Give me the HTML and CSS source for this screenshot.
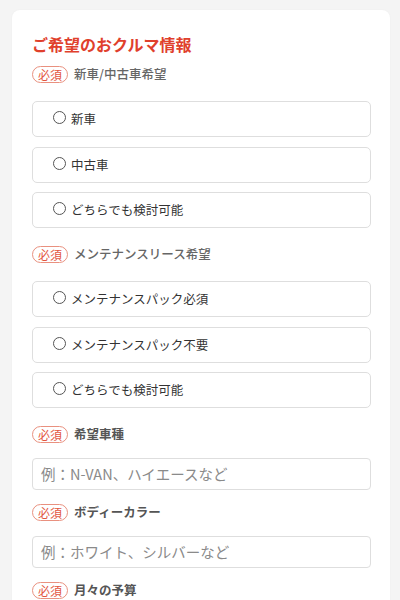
FILE: index.html
```html
<!DOCTYPE html>
<html lang="ja">
<head>
<meta charset="utf-8">
<title>ご希望のおクルマ情報</title>
<link rel="stylesheet" href="styles.css">
</head>
<body>
<div class="card">
  <h2 class="title">ご希望のおクルマ情報</h2>

  <div class="field">
    <div class="label-row"><span class="badge">必須</span><span class="label">新車/中古車希望</span></div>
    <div class="options">
      <label class="option"><span class="radio"></span><span class="opt-text">新車</span></label>
      <label class="option"><span class="radio"></span><span class="opt-text">中古車</span></label>
      <label class="option"><span class="radio"></span><span class="opt-text">どちらでも検討可能</span></label>
    </div>
  </div>

  <div class="field">
    <div class="label-row"><span class="badge">必須</span><span class="label">メンテナンスリース希望</span></div>
    <div class="options">
      <label class="option"><span class="radio"></span><span class="opt-text">メンテナンスパック必須</span></label>
      <label class="option"><span class="radio"></span><span class="opt-text">メンテナンスパック不要</span></label>
      <label class="option"><span class="radio"></span><span class="opt-text">どちらでも検討可能</span></label>
    </div>
  </div>

  <div class="field field-input">
    <div class="label-row"><span class="badge">必須</span><span class="label label-bold">希望車種</span></div>
    <div class="input"><span class="placeholder">例：N-VAN、ハイエースなど</span></div>
  </div>

  <div class="field field-input">
    <div class="label-row"><span class="badge">必須</span><span class="label label-bold">ボディーカラー</span></div>
    <div class="input"><span class="placeholder">例：ホワイト、シルバーなど</span></div>
  </div>

  <div class="field field-input">
    <div class="label-row"><span class="badge">必須</span><span class="label label-bold">月々の予算</span></div>
  </div>
</div>
</body>
</html>
```

FILE: styles.css
```css
html, body {
  margin: 0;
  padding: 0;
  background: #f4f4f4;
  font-family: "Noto Sans CJK JP", "Noto Sans", sans-serif;
  color: #333;
}

.card {
  margin: 10px 10px 0 12px;
  padding: 22px 19px 40px 20px;
  background: #fff;
  border-radius: 8px;
  box-shadow: 0 0 2px rgba(0, 0, 0, 0.04);
}

.title {
  margin: 0;
  font-size: 16px;
  line-height: 24px;
  font-weight: 700;
  color: #e0402c;
}

.field {
  margin-top: 10px;
}

.field + .field {
  margin-top: 18px;
}

.field-input + .field-input {
  margin-top: 14px;
}

.label-row {
  display: flex;
  align-items: center;
  gap: 6px;
  height: 16px;
}

.badge {
  box-sizing: border-box;
  width: 36px;
  height: 17px;
  border: 1px solid #e9917f;
  border-radius: 9px;
  color: #e2563f;
  font-size: 12px;
  line-height: 15px;
  text-align: center;
  font-weight: 400;
}

.label {
  font-size: 12.5px;
  line-height: 16px;
  color: #666;
  font-weight: 500;
}

.label-bold {
  font-weight: 700;
  color: #555;
}

.options {
  margin-top: 19px;
  display: flex;
  flex-direction: column;
  gap: 9.5px;
}

.option {
  box-sizing: border-box;
  height: 36px;
  border: 1px solid #dedede;
  border-radius: 5px;
  display: flex;
  align-items: center;
  padding-left: 20px;
  gap: 5px;
}

.radio {
  box-sizing: border-box;
  width: 13px;
  height: 13px;
  border: 1px solid #555;
  border-radius: 50%;
  margin-top: -3px;
}

.opt-text {
  font-size: 12.5px;
  line-height: 16px;
  color: #333;
}

.input {
  box-sizing: border-box;
  margin-top: 16px;
  height: 32px;
  border: 1px solid #dedede;
  border-radius: 4px;
  display: flex;
  align-items: center;
  padding-left: 8px;
}

.placeholder {
  font-size: 14.5px;
  color: #8a8a8a;
  line-height: 20px;
}
```
